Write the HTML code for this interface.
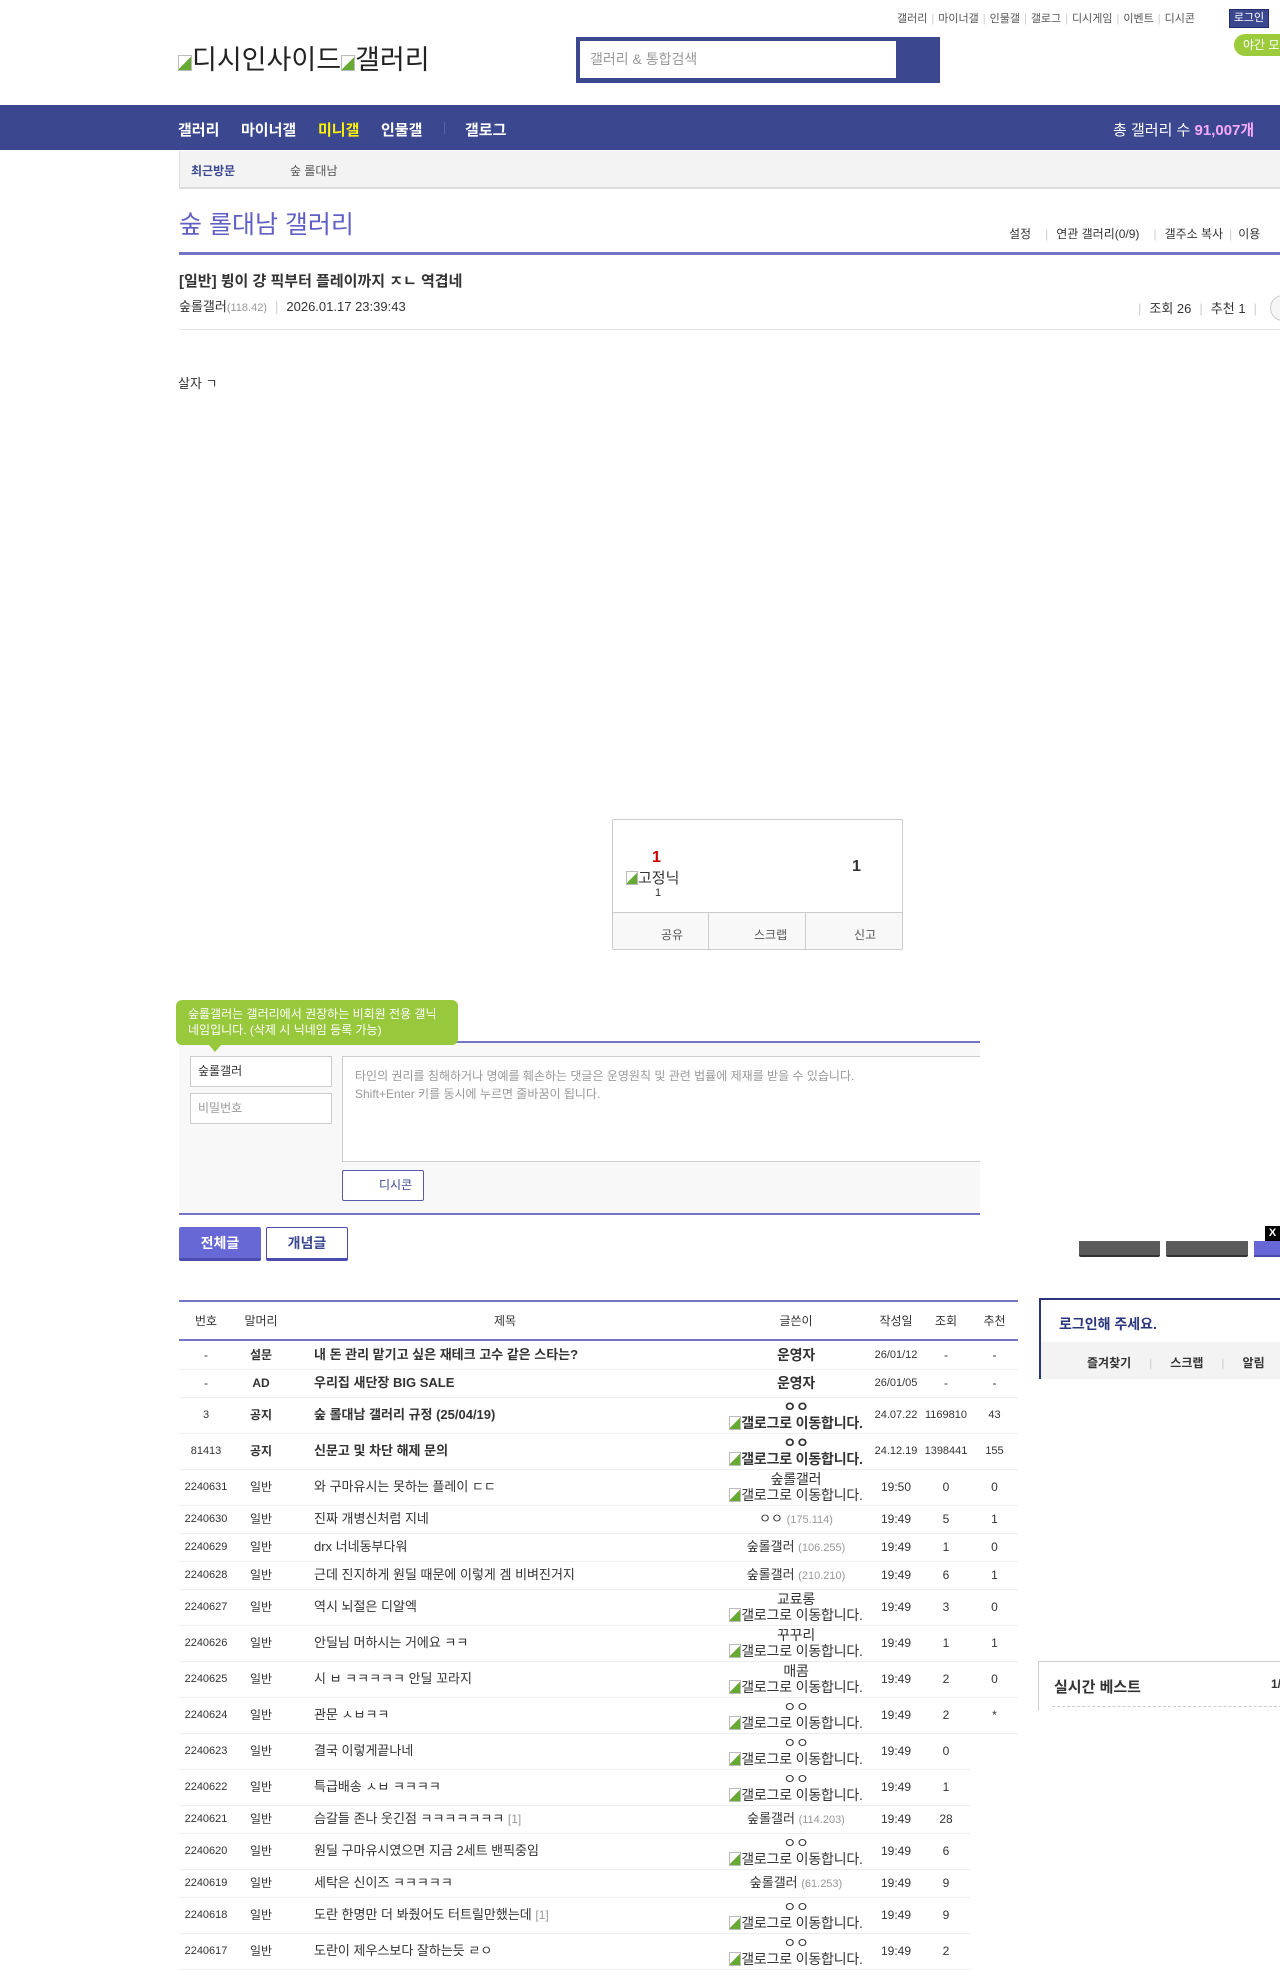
<!DOCTYPE html>
<html><head><meta charset="utf-8">
<style>
*{margin:0;padding:0;box-sizing:border-box}
body{width:1280px;height:1960px;overflow:hidden;background:#fff;font-family:"Liberation Sans","Noto Sans CJK KR",sans-serif;color:#333;position:relative;font-size:13px}
.a{position:absolute;white-space:nowrap}
.toplinks{top:10px;left:897px;font-size:11px;color:#555}
.toplinks span.s{color:#ccc;margin:0 4px}
.nav{top:105px;left:0;width:1280px;height:45px;background:#3b4890}
.nav b{position:absolute;top:14px;color:#fff;font-size:15px}
.sub{top:151px;left:179px;width:1101px;height:38px;background:#f3f3f3;border-bottom:2px solid #ddd;border-left:1px solid #ddd}
table{border-collapse:collapse;table-layout:fixed}
td{text-align:center;font-size:12px;color:#333;border-bottom:1px solid #eee;padding:0;vertical-align:middle;line-height:16px}
td.t{text-align:left;font-size:13px;padding-left:25px}
.w2{font-size:13px}
.g{font-size:14px;letter-spacing:-0.2px}
.gi{display:inline-block;width:12px;height:14px;border:1px solid #bbb;vertical-align:-2px;background:linear-gradient(135deg,#fff 50%,#6a3 50%)}
.ip{color:#999;font-size:11px}
.bold td{font-weight:bold}
.nr td:last-child{border-bottom:none}
</style></head><body>
<div class="a toplinks">갤러리<span class="s">|</span>마이너갤<span class="s">|</span>인물갤<span class="s">|</span>갤로그<span class="s">|</span>디시게임<span class="s">|</span>이벤트<span class="s">|</span>디시콘</div>
<div class="a" style="left:1229px;top:9px;width:40px;height:19px;background:#3b4890;border:1px solid #222c6a;color:#fff;font-size:11px;text-align:center;line-height:17px">로그인</div>
<div class="a" style="left:1234px;top:34px;width:60px;height:22px;background:#9ccc3c;border-radius:11px;color:#fff;font-size:12px;line-height:22px;padding-left:9px">야간 모드</div>
<div class="a" style="left:178px;top:38px;font-size:27px;color:#222"><span class="gi" style="width:14px;height:16px"></span>디시인사이드<span class="gi" style="width:14px;height:16px"></span>갤러리</div>
<div class="a" style="left:576px;top:37px;width:364px;height:46px;background:#3b4890"></div>
<div class="a" style="left:580px;top:41px;width:316px;height:37px;background:#fff;color:#999;font-size:14px;line-height:37px;padding-left:10px">갤러리 &amp; 통합검색</div>
<div class="a nav"><b style="left:178px">갤러리</b><b style="left:241px">마이너갤</b><b style="left:318px;color:#fff200">미니갤</b><b style="left:381px">인물갤</b><span style="position:absolute;left:444px;top:17px;width:1px;height:12px;background:#5a66a8"></span><b style="left:465px">갤로그</b><span style="position:absolute;left:1113px;top:14px;color:#fff;font-size:15px">총 갤러리 수 <b style="position:static;color:#f8a8ff">91,007개</b></span></div>
<div class="a sub"><span style="position:absolute;left:11px;top:11px;font-size:12px;color:#3b4890;font-weight:bold">최근방문</span><span style="position:absolute;left:110px;top:11px;font-size:12px;color:#555">숲 롤대남</span></div>
<div class="a" style="left:179px;top:205px;font-size:25px;color:#5f5fc4">숲 롤대남 갤러리</div>
<div class="a" style="left:1009px;top:225px;font-size:12px;color:#333">설정<span style="color:#ccc;margin:0 8px 0 14px">|</span>연관 갤러리(0/9)<span style="color:#ccc;margin:0 8px 0 14px">|</span>갤주소 복사<span style="color:#ccc;margin:0 6px">|</span>이용</div>
<div class="a" style="left:179px;top:252px;width:1101px;height:3px;background:#7474c4"></div>
<div class="a" style="left:179px;top:270px;font-size:15px;font-weight:bold;color:#333">[일반] 뷩이 걍 픽부터 플레이까지 ㅈㄴ 역겹네</div>
<div class="a" style="left:179px;top:296px;font-size:13px;color:#333">숲롤갤러<span class="ip">(118.42)</span><span style="color:#ccc;margin:0 8px">|</span>2026.01.17 23:39:43</div>
<div class="a" style="left:1138px;top:298px;font-size:13px;color:#333"><span style="color:#ccc;margin-right:8px">|</span>조회 26<span style="color:#ccc;margin:0 8px">|</span>추천 1<span style="color:#ccc;margin:0 8px">|</span></div>
<div class="a" style="left:1270px;top:295px;width:26px;height:26px;border:1px solid #ccc;border-radius:13px;background:#f5f5f5"></div>
<div class="a" style="left:179px;top:329px;width:1101px;height:1px;background:#e5e5e5"></div>
<div class="a" style="left:178px;top:373px;font-size:13px">살자 ㄱ</div>

<div class="a" style="left:612px;top:819px;width:291px;height:131px;border:1px solid #ccc;border-radius:2px"></div>
<div class="a" style="left:652px;top:849px;font-size:16px;font-weight:bold;color:#c00">1</div>
<div class="a" style="left:626px;top:867px;font-size:15px;color:#333"><span class="gi"></span>고정닉</div>
<div class="a" style="left:655px;top:887px;font-size:11px">1</div>
<div class="a" style="left:852px;top:858px;font-size:16px;font-weight:bold">1</div>
<div class="a" style="left:613px;top:912px;width:289px;height:37px;background:#f8f8f8;border-top:1px solid #ccc;font-size:12px;color:#555">
<span style="position:absolute;left:0;width:96px;height:36px;border-right:1px solid #ccc"></span><span style="position:absolute;left:96px;width:97px;height:36px;border-right:1px solid #ccc"></span>
<span style="position:absolute;left:48px;top:13px">공유</span><span style="position:absolute;left:141px;top:13px">스크랩</span><span style="position:absolute;left:241px;top:13px">신고</span></div>

<div class="a" style="left:179px;top:1041px;width:801px;height:174px;background:#f8f8f8;border-top:2px solid #7474c4;border-bottom:2px solid #7474c4"></div>
<div class="a" style="left:176px;top:1000px;width:282px;height:45px;background:#98c93c;border-radius:6px;color:#fff;font-size:12px;line-height:16px;padding:6px 12px;white-space:normal">숲롤갤러는 갤러리에서 권장하는 비회원 전용 갤닉네임입니다. (삭제 시 닉네임 등록 가능)</div>
<div class="a" style="left:209px;top:1045px;width:0;height:0;border:6px solid transparent;border-top:7px solid #98c93c"></div>
<div class="a" style="left:190px;top:1056px;width:142px;height:31px;background:#fff;border:1px solid #ccc;font-size:12px;line-height:29px;padding-left:7px;color:#333">숲롤갤러</div>
<div class="a" style="left:190px;top:1093px;width:142px;height:31px;background:#fff;border:1px solid #ccc;font-size:12px;line-height:29px;padding-left:7px;color:#999">비밀번호</div>
<div class="a" style="left:342px;top:1056px;width:638px;height:106px;background:#fff;border:1px solid #ccc;border-right:none;font-size:12px;color:#999;line-height:18px;padding:10px 12px">타인의 권리를 침해하거나 명예를 훼손하는 댓글은 운영원칙 및 관련 법률에 제재를 받을 수 있습니다.<br>Shift+Enter 키를 동시에 누르면 줄바꿈이 됩니다.</div>
<div class="a" style="left:342px;top:1170px;width:82px;height:31px;background:#fff;border:1px solid #5a5aa8;border-radius:2px;font-size:12px;color:#3b4890;line-height:29px;padding-left:36px">디시콘</div>

<div class="a" style="left:179px;top:1227px;width:82px;height:34px;background:#6767d6;border-bottom:3px solid #4b4bb0;border-radius:2px;color:#fff;font-weight:bold;font-size:14px;text-align:center;line-height:32px">전체글</div>
<div class="a" style="left:266px;top:1227px;width:82px;height:34px;background:#fff;border:1px solid #4b4bb0;border-bottom:3px solid #4b4bb0;border-radius:2px;color:#3b4890;font-weight:bold;font-size:14px;text-align:center;line-height:30px">개념글</div>
<div class="a" style="left:1079px;top:1241px;width:81px;height:16px;background:#5b5b5b;border-bottom:2px solid #333;border-radius:0 0 2px 2px"></div>
<div class="a" style="left:1166px;top:1241px;width:82px;height:16px;background:#5b5b5b;border-bottom:2px solid #333;border-radius:0 0 2px 2px"></div>
<div class="a" style="left:1254px;top:1241px;width:30px;height:16px;background:#6767d6;border-bottom:2px solid #4b4bb0"></div>
<div class="a" style="left:1265px;top:1226px;width:15px;height:15px;background:#000;color:#fff;font-size:11px;font-weight:bold;text-align:center;line-height:15px">X</div>

<div class="a" style="left:1039px;top:1298px;width:250px;height:81px;border:2px solid #29367c;border-right:none"><div style="position:absolute;left:18px;top:14px;font-size:14px;font-weight:bold;color:#29367c">로그인해 주세요.</div><div style="position:absolute;left:0;top:42px;width:100%;height:37px;background:#f3f3f3;font-size:12px;color:#333;font-weight:bold;padding:12px 0 0 46px">즐겨찾기<span style="color:#ccc;margin:0 18px;font-weight:normal">|</span>스크랩<span style="color:#ccc;margin:0 18px;font-weight:normal">|</span>알림</div></div>
<div class="a" style="left:1038px;top:1661px;width:250px;height:50px;border:1px solid #ccc;border-bottom:none"><div style="position:absolute;left:15px;top:14px;font-size:15px;font-weight:bold">실시간 베스트</div><div style="position:absolute;left:232px;top:15px;font-size:12px;font-weight:bold">1/</div><div style="position:absolute;left:13px;top:44px;width:240px;border-top:1px dashed #ccc"></div></div>

<table class="a" style="left:179px;top:1300px;width:839px">
<colgroup><col style="width:54px"><col style="width:56px"><col style="width:432px"><col style="width:150px"><col style="width:50px"><col style="width:50px"><col style="width:47px"></colgroup>
<tr style="height:39px"><td style="border-top:2px solid #7474c4;border-bottom:2px solid #7474c4">번호</td><td style="border-top:2px solid #7474c4;border-bottom:2px solid #7474c4">말머리</td><td style="border-top:2px solid #7474c4;border-bottom:2px solid #7474c4">제목</td><td style="border-top:2px solid #7474c4;border-bottom:2px solid #7474c4">글쓴이</td><td style="border-top:2px solid #7474c4;border-bottom:2px solid #7474c4">작성일</td><td style="border-top:2px solid #7474c4;border-bottom:2px solid #7474c4">조회</td><td style="border-top:2px solid #7474c4;border-bottom:2px solid #7474c4">추천</td></tr>
<tr class="bold" style="height:29px"><td style="font-weight:normal">-</td><td>설문</td><td class="t">내 돈 관리 맡기고 싶은 재테크 고수 같은 스타는?</td><td class="g">운영자</td><td style="font-weight:normal;font-size:11px">26/01/12</td><td style="font-weight:normal">-</td><td style="font-weight:normal">-</td></tr>
<tr class="bold" style="height:28px"><td style="font-weight:normal">-</td><td>AD</td><td class="t">우리집 새단장 BIG SALE</td><td class="g">운영자</td><td style="font-weight:normal;font-size:11px">26/01/05</td><td style="font-weight:normal">-</td><td style="font-weight:normal">-</td></tr>
<tr style="height:36px"><td style="font-size:11px">3</td><td style="font-weight:bold">공지</td><td class="t" style="font-weight:bold">숲 롤대남 갤러리 규정 (25/04/19)</td><td class="g" style="font-weight:bold">ㅇㅇ<br><span class="gi"></span>갤로그로 이동합니다.</td><td style="font-size:11px">24.07.22</td><td style="font-size:11px">1169810</td><td style="font-size:11px">43</td></tr>
<tr style="height:36px"><td style="font-size:11px">81413</td><td style="font-weight:bold">공지</td><td class="t" style="font-weight:bold">신문고 및 차단 해제 문의</td><td class="g" style="font-weight:bold">ㅇㅇ<br><span class="gi"></span>갤로그로 이동합니다.</td><td style="font-size:11px">24.12.19</td><td style="font-size:11px">1398441</td><td style="font-size:11px">155</td></tr>
<tr style="height:36px"><td style="font-size:11px">2240631</td><td>일반</td><td class="t">와 구마유시는 못하는 플레이 ㄷㄷ</td><td class="g">숲롤갤러<br><span class="gi"></span>갤로그로 이동합니다.</td><td>19:50</td><td>0</td><td>0</td></tr>
<tr style="height:28px"><td style="font-size:11px">2240630</td><td>일반</td><td class="t">진짜 개병신처럼 지네</td><td class="w2">ㅇㅇ <span class="ip">(175.114)</span></td><td>19:49</td><td>5</td><td>1</td></tr>
<tr style="height:28px"><td style="font-size:11px">2240629</td><td>일반</td><td class="t">drx 너네동부다워</td><td class="w2">숲롤갤러 <span class="ip">(106.255)</span></td><td>19:49</td><td>1</td><td>0</td></tr>
<tr style="height:28px"><td style="font-size:11px">2240628</td><td>일반</td><td class="t">근데 진지하게 원딜 때문에 이렇게 겜 비벼진거지</td><td class="w2">숲롤갤러 <span class="ip">(210.210)</span></td><td>19:49</td><td>6</td><td>1</td></tr>
<tr style="height:36px"><td style="font-size:11px">2240627</td><td>일반</td><td class="t">역시 뇌절은 디알엑</td><td class="g">교료롱<br><span class="gi"></span>갤로그로 이동합니다.</td><td>19:49</td><td>3</td><td>0</td></tr>
<tr style="height:36px"><td style="font-size:11px">2240626</td><td>일반</td><td class="t">안딜님 머하시는 거에요 ㅋㅋ</td><td class="g">꾸꾸리<br><span class="gi"></span>갤로그로 이동합니다.</td><td>19:49</td><td>1</td><td>1</td></tr>
<tr style="height:36px"><td style="font-size:11px">2240625</td><td>일반</td><td class="t">시 ㅂ ㅋㅋㅋㅋㅋ 안딜 꼬라지</td><td class="g">매콤<br><span class="gi"></span>갤로그로 이동합니다.</td><td>19:49</td><td>2</td><td>0</td></tr>
<tr style="height:36px"><td style="font-size:11px">2240624</td><td>일반</td><td class="t">관문 ㅅㅂㅋㅋ</td><td class="g">ㅇㅇ<br><span class="gi"></span>갤로그로 이동합니다.</td><td>19:49</td><td>2</td><td>*</td></tr>
<tr class="nr" style="height:36px"><td style="font-size:11px">2240623</td><td>일반</td><td class="t">결국 이렇게끝나네</td><td class="g">ㅇㅇ<br><span class="gi"></span>갤로그로 이동합니다.</td><td>19:49</td><td>0</td><td></td></tr>
<tr class="nr" style="height:36px"><td style="font-size:11px">2240622</td><td>일반</td><td class="t">특급배송 ㅅㅂ ㅋㅋㅋㅋ</td><td class="g">ㅇㅇ<br><span class="gi"></span>갤로그로 이동합니다.</td><td>19:49</td><td>1</td><td></td></tr>
<tr class="nr" style="height:28px"><td style="font-size:11px">2240621</td><td>일반</td><td class="t">슴갈들 존나 웃긴점 ㅋㅋㅋㅋㅋㅋㅋ <span class="ip" style="font-size:12px">[1]</span></td><td class="w2">숲롤갤러 <span class="ip">(114.203)</span></td><td>19:49</td><td>28</td><td></td></tr>
<tr class="nr" style="height:36px"><td style="font-size:11px">2240620</td><td>일반</td><td class="t">원딜 구마유시였으면 지금 2세트 밴픽중임</td><td class="g">ㅇㅇ<br><span class="gi"></span>갤로그로 이동합니다.</td><td>19:49</td><td>6</td><td></td></tr>
<tr class="nr" style="height:28px"><td style="font-size:11px">2240619</td><td>일반</td><td class="t">세탁은 신이즈 ㅋㅋㅋㅋㅋ</td><td class="w2">숲롤갤러 <span class="ip">(61.253)</span></td><td>19:49</td><td>9</td><td></td></tr>
<tr class="nr" style="height:36px"><td style="font-size:11px">2240618</td><td>일반</td><td class="t">도란 한명만 더 봐줬어도 터트릴만했는데 <span class="ip" style="font-size:12px">[1]</span></td><td class="g">ㅇㅇ<br><span class="gi"></span>갤로그로 이동합니다.</td><td>19:49</td><td>9</td><td></td></tr>
<tr class="nr" style="height:36px"><td style="font-size:11px">2240617</td><td>일반</td><td class="t">도란이 제우스보다 잘하는듯 ㄹㅇ</td><td class="g">ㅇㅇ<br><span class="gi"></span>갤로그로 이동합니다.</td><td>19:49</td><td>2</td><td></td></tr>
</table>
</body></html>
